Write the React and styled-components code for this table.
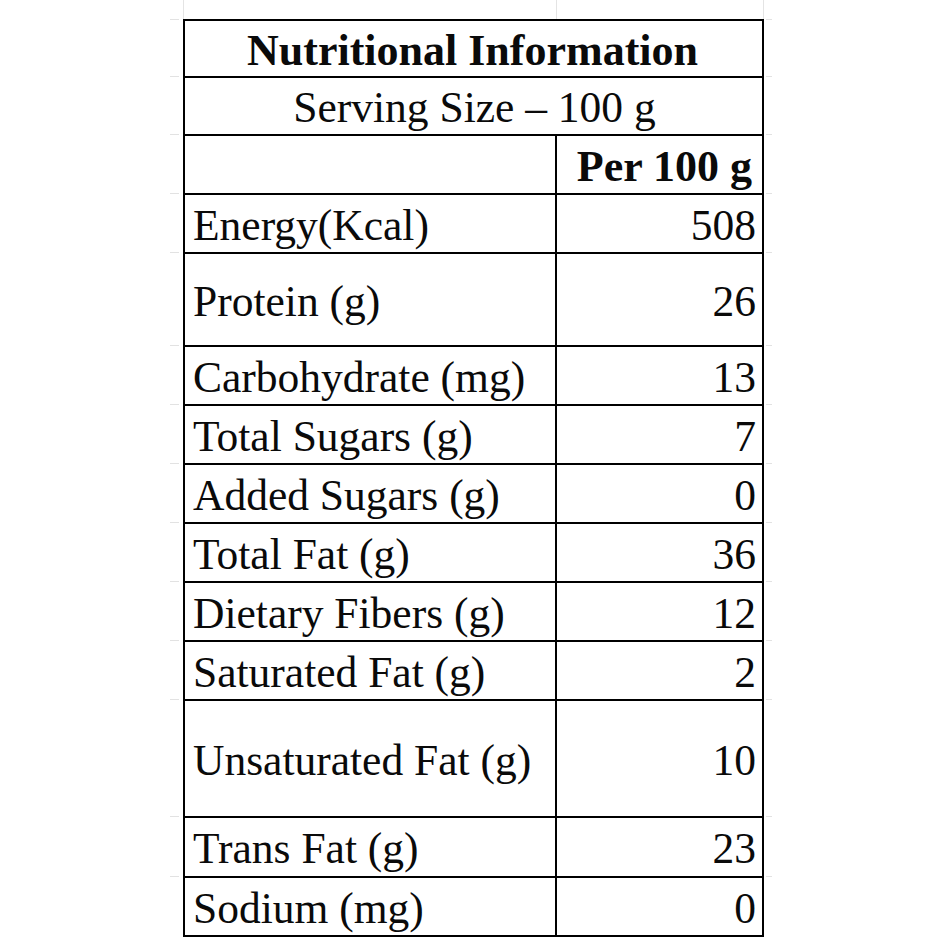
import React from 'react';
import styled, { createGlobalStyle } from 'styled-components';

const GlobalStyle = createGlobalStyle`
  html, body {
    margin: 0;
    padding: 0;
    background: #ffffff;
  }
  body {
    font-family: "Liberation Serif", "Times New Roman", serif;
    color: #0a0a0a;
  }
`;

const Sheet = styled.div`
  width: 940px;
  height: 940px;
  padding-left: 183px;
  box-sizing: border-box;
  overflow: hidden;
`;

const GhostRow = styled.div`
  width: 581px;
  height: 19px;
  display: grid;
  grid-template-columns: 372px 1fr;
  border-left: 1px solid #e4e4e4;
  border-right: 1px solid #e4e4e4;
  box-sizing: border-box;

  & > div + div {
    border-left: 1px solid #e4e4e4;
  }
`;

const Table = styled.div`
  width: 581px;
  border: 2px solid #000;
  box-sizing: border-box;
`;

const Row = styled.div`
  position: relative;
  height: ${(p) => p.$h}px;
  display: grid;
  grid-template-columns: ${(p) => (p.$span ? '1fr' : '370px 1fr')};
  box-sizing: border-box;

  & + & {
    border-top: 2px solid #000;
  }

  &::before,
  &::after {
    content: '';
    position: absolute;
    top: -2px;
    height: 1px;
    background: #e2e2e2;
  }
  &::before {
    left: -15px;
    width: 9px;
  }
  &::after {
    right: -10px;
    width: 6px;
  }
`;

const Cell = styled.div`
  display: flex;
  align-items: center;
  justify-content: ${(p) =>
    p.$align === 'center' ? 'center' : p.$align === 'right' ? 'flex-end' : 'flex-start'};
  padding: 4px ${(p) => (p.$bold ? '10px' : '6px')} 0 8px;
  font-size: ${(p) => (p.$bold ? '44px' : '43.5px')};
  font-weight: ${(p) => (p.$bold ? 700 : 400)};
  white-space: nowrap;
  line-height: 1;

  & + & {
    border-left: 2px solid #000;
  }
`;

const rows = [
  { label: 'Energy(Kcal)', value: '508', h: 59 },
  { label: 'Protein (g)', value: '26', h: 93 },
  { label: 'Carbohydrate (mg)', value: '13', h: 59 },
  { label: 'Total Sugars (g)', value: '7', h: 59 },
  { label: 'Added Sugars (g)', value: '0', h: 59 },
  { label: 'Total Fat (g)', value: '36', h: 59 },
  { label: 'Dietary Fibers (g)', value: '12', h: 59 },
  { label: 'Saturated Fat (g)', value: '2', h: 59 },
  { label: 'Unsaturated Fat (g)', value: '10', h: 117 },
  { label: 'Trans Fat (g)', value: '23', h: 60 },
  { label: 'Sodium (mg)', value: '0', h: 59 },
];

export default function App() {
  return (
    <>
      <GlobalStyle />
      <Sheet>
        <GhostRow>
          <div />
          <div />
        </GhostRow>
        <Table>
          <Row $h={55} $span>
            <Cell $align="center" $bold>
              Nutritional Information
            </Cell>
          </Row>
          <Row $h={58} $span>
            <Cell $align="center">Serving Size – 100 g</Cell>
          </Row>
          <Row $h={59}>
            <Cell $align="left" />
            <Cell $align="right" $bold>
              Per 100 g
            </Cell>
          </Row>
          {rows.map((r) => (
            <Row key={r.label} $h={r.h}>
              <Cell $align="left">{r.label}</Cell>
              <Cell $align="right">{r.value}</Cell>
            </Row>
          ))}
        </Table>
      </Sheet>
    </>
  );
}
